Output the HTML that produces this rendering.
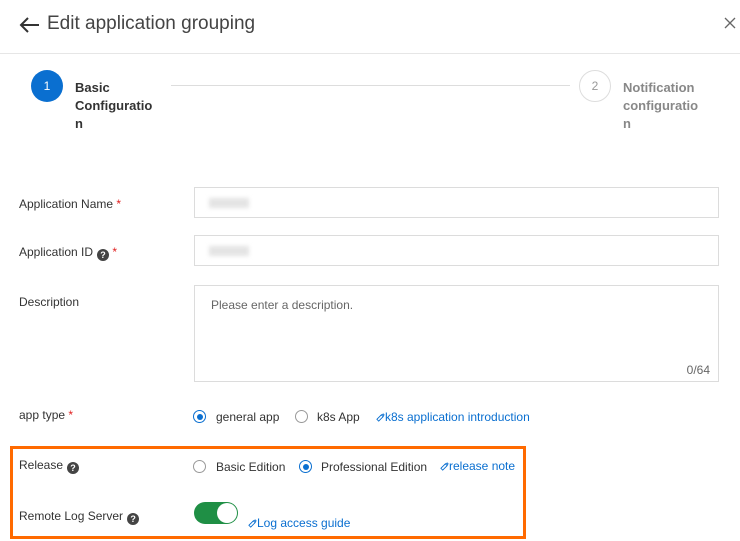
<!DOCTYPE html>
<html><head><meta charset="utf-8"><style>
body{margin:0;width:740px;height:541px;background:#fff;font-family:"Liberation Sans",sans-serif;color:#333;font-size:12px;position:relative;overflow:hidden}
.a{position:absolute;white-space:nowrap}
.inp{position:absolute;left:194px;width:525px;border:1px solid #dcdcdc;box-sizing:border-box}
.star{color:#e02020}
.q{display:inline-block;width:12px;height:12px;border-radius:50%;background:#444;color:#fff;font-size:9px;line-height:12px;text-align:center;font-weight:bold;vertical-align:-2px;margin-left:4px}
.r{position:absolute;width:13px;height:13px;border:1px solid #999;border-radius:50%;box-sizing:border-box;background:#fff}
.r.on{border-color:#0a6fd0}
.r.on::after{content:"";position:absolute;left:2.5px;top:2.5px;width:6px;height:6px;border-radius:50%;background:#0a6fd0}
.lnk{color:#0a6fd0}
.li{display:inline-block;width:9px;height:9px;vertical-align:-1px}
.blur{position:absolute;left:14px;top:10px;width:40px;height:10px;background:#e4e4e4;filter:blur(2px)}
</style></head><body>
<svg class="a" style="left:18px;top:16px" width="22" height="18" viewBox="0 0 22 18"><path d="M21 9H3M10 2L3 9l7 7" fill="none" stroke="#333" stroke-width="2"/></svg>
<div class="a" style="left:47px;top:13px;font-size:19px;color:#444">Edit application grouping</div>
<svg class="a" style="left:724px;top:17px" width="12" height="12" viewBox="0 0 12 12"><path d="M1 1l10 10M11 1L1 11" stroke="#666" stroke-width="1.3"/></svg>
<div class="a" style="left:0;top:53px;width:740px;height:1px;background:#e6e6e6"></div>
<div class="a" style="left:31px;top:70px;width:32px;height:32px;border-radius:50%;background:#0a6fd0;color:#fff;text-align:center;line-height:32px;font-size:12px">1</div>
<div class="a" style="left:75px;top:79px;font-weight:bold;font-size:13px;line-height:18px;color:#333;white-space:normal">Basic<br>Configuratio<br>n</div>
<div class="a" style="left:171px;top:85px;width:399px;height:1px;background:#ddd"></div>
<div class="a" style="left:579px;top:70px;width:32px;height:32px;border-radius:50%;border:1px solid #ddd;box-sizing:border-box;color:#999;text-align:center;line-height:30px;font-size:12px">2</div>
<div class="a" style="left:623px;top:79px;font-weight:bold;font-size:13px;line-height:18px;color:#888;white-space:normal">Notification<br>configuratio<br>n</div>

<div class="a" style="left:19px;top:197px">Application Name <span class="star">*</span></div>
<div class="inp" style="top:187px;height:31px"><div class="blur"></div></div>
<div class="a" style="left:19px;top:245px">Application ID<span class="q">?</span> <span class="star">*</span></div>
<div class="inp" style="top:235px;height:31px"><div class="blur"></div></div>
<div class="a" style="left:19px;top:295px">Description</div>
<div class="inp" style="top:285px;height:97px"><div class="a" style="left:16px;top:12px;color:#666">Please enter a description.</div><div class="a" style="right:8px;bottom:4px;color:#666">0/64</div></div>

<div class="a" style="left:19px;top:408px">app type <span class="star">*</span></div>
<div class="r on" style="left:193px;top:410px"></div><div class="a" style="left:216px;top:410px">general app</div>
<div class="r" style="left:295px;top:410px"></div><div class="a" style="left:317px;top:410px">k8s App</div>
<div class="a lnk" style="left:376px;top:410px"><svg class="li" viewBox="0 0 10 10"><path d="M6 2l2 2-5 5-2-2zM5 3l3-2 1 1-2 3" fill="none" stroke="#0a6fd0"/></svg>k8s application introduction</div>

<div class="a" style="left:10px;top:446px;width:516px;height:93px;border:3px solid #ff6a00;box-sizing:border-box"></div>
<div class="a" style="left:19px;top:458px">Release<span class="q">?</span></div>
<div class="r" style="left:193px;top:460px"></div><div class="a" style="left:216px;top:460px">Basic Edition</div>
<div class="r on" style="left:299px;top:460px"></div><div class="a" style="left:321px;top:460px">Professional Edition</div>
<div class="a lnk" style="left:440px;top:459px"><svg class="li" viewBox="0 0 10 10"><path d="M6 2l2 2-5 5-2-2zM5 3l3-2 1 1-2 3" fill="none" stroke="#0a6fd0"/></svg>release note</div>
<div class="a" style="left:19px;top:509px">Remote Log Server<span class="q">?</span></div>
<div class="a" style="left:194px;top:502px;width:44px;height:22px;border-radius:11px;background:#1f8f45"></div>
<div class="a" style="left:217px;top:503px;width:20px;height:20px;border-radius:50%;background:#fff"></div>
<div class="a lnk" style="left:248px;top:516px"><svg class="li" viewBox="0 0 10 10"><path d="M6 2l2 2-5 5-2-2zM5 3l3-2 1 1-2 3" fill="none" stroke="#0a6fd0"/></svg>Log access guide</div>
</body></html>
